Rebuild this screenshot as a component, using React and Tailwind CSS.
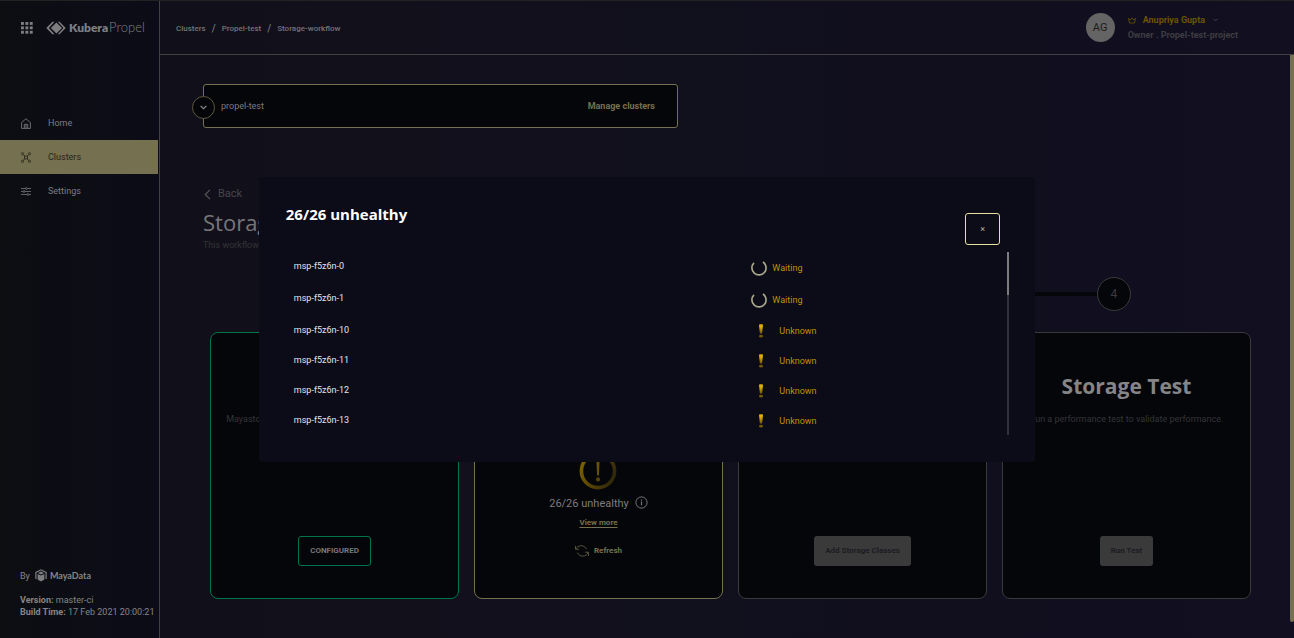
import React from "react";

const pools = [
  { name: "msp-f5z6n-0", status: "Waiting" },
  { name: "msp-f5z6n-1", status: "Waiting" },
  { name: "msp-f5z6n-10", status: "Unknown" },
  { name: "msp-f5z6n-11", status: "Unknown" },
  { name: "msp-f5z6n-12", status: "Unknown" },
  { name: "msp-f5z6n-13", status: "Unknown" },
];

function GridIcon() {
  return (
    <svg width="12" height="12" viewBox="0 0 12 12" fill="#7e7e81">
      {[0, 4.4, 8.8].map((y) => [0, 4.4, 8.8].map((x) => <rect key={`${x}-${y}`} x={x} y={y} width="2.9" height="2.9" />))}
    </svg>
  );
}

function KuberaMark() {
  return (
    <svg width="20" height="14" viewBox="0 0 20 14" fill="#7e7e81">
      <path d="M10.4 1.4 L16 7 L10.4 12.6 L4.8 7 Z" />
      <path d="M6.4 0.8 H8.4 L2.9 7 L8.4 13.2 H6.4 L0.3 7 Z" />
      <path d="M11.8 0.8 H13.6 L19.7 7 L13.6 13.2 H11.8 L17.4 7 Z" />
    </svg>
  );
}

function HomeIcon() {
  return (
    <svg width="10" height="11" viewBox="0 0 10 11" fill="none" stroke="#77777a" strokeWidth="0.9">
      <path d="M0.6 4.6 L5 0.7 L9.4 4.6 V10.4 H0.6 Z" />
      <path d="M3.3 10.2 V6.3 H6.7 V10.2 M5 6.5 V10" />
    </svg>
  );
}

function ClustersIcon() {
  return (
    <svg width="10" height="11" viewBox="0 0 10 11" fill="none" stroke="#26241b" strokeWidth="0.8">
      <circle cx="1.5" cy="1.7" r="1.1" />
      <circle cx="8.5" cy="1.7" r="1.1" />
      <circle cx="1.5" cy="9.3" r="1.1" />
      <circle cx="8.5" cy="9.3" r="1.1" />
      <rect x="3.6" y="4.1" width="2.8" height="2.8" />
      <path d="M2.3 2.6 L3.7 4.2 M7.7 2.6 L6.3 4.2 M2.3 8.4 L3.7 6.8 M7.7 8.4 L6.3 6.8" />
    </svg>
  );
}

function SettingsIcon() {
  return (
    <svg width="10" height="9" viewBox="0 0 10 9" fill="none" stroke="#77777a" strokeWidth="0.8">
      <path d="M0 1.5 H4.3 M6.3 1.5 H10 M0 4.5 H2 M4 4.5 H10 M0 7.5 H6 M8 7.5 H10" />
      <circle cx="5.3" cy="1.5" r="0.9" />
      <circle cx="3" cy="4.5" r="0.9" />
      <circle cx="7" cy="7.5" r="0.9" />
    </svg>
  );
}

function MayaMark() {
  return (
    <svg width="12" height="13" viewBox="0 0 12 13">
      <path d="M2.6 5 L6 6.6 L9.4 5 V10.6 L6 12.6 L2.6 10.6 Z" fill="#7e7e81" />
      <path d="M0.9 10 V3.4 L6 0.8 L11.1 3.4 V10" fill="none" stroke="#7e7e81" strokeWidth="1.2" />
      <path d="M3 4 L6 2.5 L9 4 L6 5.5 Z" fill="#7e7e81" />
    </svg>
  );
}

function Spinner() {
  return (
    <svg width="16" height="16" viewBox="0 0 16 16" fill="none" stroke="#a9a68c" strokeWidth="1.7">
      <path d="M3 2.8 A7.1 7.1 0 1 0 12 2" />
    </svg>
  );
}

function Exclamation() {
  return (
    <svg width="6" height="14" viewBox="0 0 6 14">
      <defs>
        <linearGradient id="bang" x1="0" y1="0" x2="0" y2="1">
          <stop offset="0.3" stopColor="#dcae00" />
          <stop offset="1" stopColor="#6b560a" />
        </linearGradient>
      </defs>
      <path d="M1 1.2 Q1 0.2 2 0.2 H4 Q5 0.2 5 1.2 L4.1 9.6 H1.9 Z" fill="url(#bang)" />
      <ellipse cx="3" cy="12.2" rx="2" ry="1.4" fill="#705a0b" />
    </svg>
  );
}

function WarningRing() {
  return (
    <svg width="38" height="38" viewBox="0 0 38 38">
      <defs>
        <linearGradient id="ring" x1="0" y1="0.3" x2="1" y2="0.75">
          <stop offset="0" stopColor="#7a5f00" />
          <stop offset="1" stopColor="#2e260a" />
        </linearGradient>
      </defs>
      <circle cx="19" cy="19" r="16.6" fill="none" stroke="url(#ring)" strokeWidth="3.6" />
      <path d="M17.4 8 H20.6 L19.9 23.6 H18.1 Z" fill="#66520a" />
      <circle cx="19" cy="27.4" r="2.1" fill="#54440a" />
    </svg>
  );
}

function RefreshIcon() {
  return (
    <svg width="14" height="12" viewBox="0 0 14 12" fill="none" stroke="#5f5b3f" strokeWidth="0.9">
      <path d="M0.5 1 V4.3 H4 M0.8 4.1 C2.6 0 9.2 -0.8 11.6 4.2" />
      <path d="M13.5 11 V7.2 H10 M13.2 7.5 C11.4 12 4.8 12.6 2.3 7.6" />
    </svg>
  );
}

function Sidebar() {
  return (
    <aside className="flex w-40 shrink-0 flex-col border-r border-[#414142] bg-linear-to-r from-[#0c0e12] to-[#0c0c18]">
      <div className="flex h-[53px] items-center gap-[13px] pl-[21px]">
        <button aria-label="Applications">
          <GridIcon />
        </button>
        <a href="#home" className="flex items-center gap-[3px] font-['Lato',sans-serif] text-[12px] leading-4 text-[#7e7e81]">
          <KuberaMark />
          <span>
            <span className="font-extrabold">Kubera</span>
            <span className="ml-px text-[13px] font-light">Propel</span>
          </span>
        </a>
      </div>
      <nav className="mt-[52px] flex flex-col pr-px text-[#7c7c7f]">
        <a href="#home" className="flex h-[34px] items-center gap-[17px] pl-[21px]">
          <HomeIcon />
          Home
        </a>
        <a href="#clusters" className="flex h-[34px] items-center gap-[17px] bg-[#757050] pl-[21px] text-[#26241b]">
          <ClustersIcon />
          Clusters
        </a>
        <a href="#settings" className="flex h-[34px] items-center gap-[17px] pl-[21px]">
          <SettingsIcon />
          Settings
        </a>
      </nav>
      <div className="mt-auto pb-5 pl-5 text-[#858587]">
        <div className="mb-3 flex items-center">
          By
          <span className="ml-[5px] flex items-center gap-[3px] font-['Lato',sans-serif] font-bold">
            <MayaMark />
            MayaData
          </span>
        </div>
        <p>
          <b>Version:</b> master-ci
        </p>
        <p className="whitespace-nowrap">
          <b>Build Time:</b> 17 Feb 2021 20:00:21
        </p>
      </div>
    </aside>
  );
}

function TopBar() {
  return (
    <header className="flex h-[54px] items-center border-b border-[#414142] pr-14 pl-4">
      <nav aria-label="Breadcrumb" className="flex items-center gap-1.5 pt-0.5 text-[8px] font-medium text-[#737377]">
        <a href="#clusters">Clusters</a>
        <span className="text-[10px]">/</span>
        <a href="#propel-test">Propel-test</a>
        <span className="text-[10px]">/</span>
        <a href="#workflow">Storage-workflow</a>
      </nav>
      <div className="ml-auto flex items-center gap-[13px]">
        <span className="flex size-[29px] items-center justify-center rounded-full bg-[#646464] text-[11px] text-[#1c1c1e]">AG</span>
        <div className="font-bold">
          <button className="flex h-[15px] items-center text-[#6b5500]">
            <svg width="8" height="7" viewBox="0 0 8 7" fill="none" stroke="#6b5500" strokeWidth="0.8" className="mr-[7px]">
              <path d="M0.5 1.4 L2.3 3 L4 0.9 L5.7 3 L7.5 1.4 L6.5 6 H1.5 Z" />
            </svg>
            Anupriya Gupta
            <svg width="5" height="4" viewBox="0 0 5 4" fill="none" stroke="#4a4a50" strokeWidth="0.9" className="ml-2">
              <path d="M0.5 0.8 L2.5 2.8 L4.5 0.8" />
            </svg>
          </button>
          <p className="h-[15px] leading-[15px] text-[#3d3d43]">Owner . Propel-test-project</p>
        </div>
      </div>
    </header>
  );
}

function ClusterPicker() {
  return (
    <div className="mr-[613px] flex h-11 min-w-[475px] items-center rounded-[3px] border border-[#757050] bg-[#05060a] pr-[22px]">
      <button
        aria-label="Choose cluster"
        className="-ml-3 mt-0.5 flex size-[23px] items-center justify-center rounded-full border border-[#5c583f] bg-[#05060a]"
      >
        <svg width="7" height="5" viewBox="0 0 7 5" fill="none" stroke="#8a8a8c" strokeWidth="1.2">
          <path d="M0.6 0.8 L3.5 3.7 L6.4 0.8" />
        </svg>
      </button>
      <span className="ml-1.5 text-[#7c7c7f]">propel-test</span>
      <a href="#manage" className="ml-auto font-bold text-[#757050]">
        Manage clusters
      </a>
    </div>
  );
}

function Stepper() {
  return (
    <ol className="mr-[159px] ml-[110px] flex h-[34px] items-center text-[#3c3c40]">
      {[1, 2, 3, 4].map((step) => (
        <li key={step} className={step === 1 ? "flex items-center" : "flex flex-1 items-center"}>
          {step > 1 && <span className="h-1 flex-1 bg-[#05060a]" />}
          <span className="flex size-[34px] items-center justify-center rounded-full border border-[#3a3a3c] bg-[#05060a] text-[12px]">
            {step}
          </span>
        </li>
      ))}
    </ol>
  );
}

function Card({ title, text, border, children }) {
  return (
    <section className={`flex h-[267px] flex-col items-center rounded-lg border bg-[#05060a] px-3 pt-[39px] pb-8 ${border}`}>
      <h2 className="h-7 font-['Open_Sans',sans-serif] text-[21px] leading-7 font-bold text-[#858587]">{title}</h2>
      <p className="mt-[13px] whitespace-nowrap text-[#343438]">{text}</p>
      <div className="mt-auto flex flex-col items-center">{children}</div>
    </section>
  );
}

function Cards() {
  const disabledButton = "h-[30px] rounded-[3px] bg-[#3a3a3a] px-[11px] text-[8px] font-bold text-[#1c1c22]";
  return (
    <div className="grid grid-cols-4 gap-[15px] pr-[39px] pl-[7px]">
      <Card text="Mayastor has been installed and set up on this cluster." border="border-[#00754a]">
        <button className="h-[30px] rounded-[3px] border border-[#00754a] px-[11px] text-[8px] font-bold text-[#77777a]">CONFIGURED</button>
      </Card>
      <Card border="border-[#757050]">
        <WarningRing />
        <div className="mt-1 flex h-5 items-center gap-1.5 text-[11px] text-[#7c7c7f]">
          26/26 unhealthy
          <svg width="13" height="13" viewBox="0 0 13 13" fill="none" stroke="#77777a" className="mb-1">
            <circle cx="6.5" cy="6.5" r="5.6" />
            <path d="M6.5 5.6 V9.2 M6.5 3.5 V4.7" strokeWidth="1.2" />
          </svg>
        </div>
        <a href="#more" className="mt-px text-[8px] leading-4 font-bold text-[#757050] underline underline-offset-2">
          View more
        </a>
        <button className="mt-3 mb-[7px] flex h-4 items-center gap-[5px] text-[8px] font-bold text-[#757050]">
          <RefreshIcon />
          Refresh
        </button>
      </Card>
      <Card border="border-[#3a3a3c]">
        <button className={disabledButton}>Add Storage Classes</button>
      </Card>
      <Card title="Storage Test" text="Run a performance test to validate performance." border="border-[#3a3a3c]">
        <button className={disabledButton}>Run Test</button>
      </Card>
    </div>
  );
}

function PoolsDialog() {
  return (
    <div className="fixed inset-0 flex items-center justify-center">
      <div role="dialog" aria-labelledby="pools-title" className="flex h-[285px] w-3/5 flex-col rounded-[3px] bg-[#0c0b18] pr-[26px] pb-[27px] pl-[27px]">
        <div className="flex h-[75px] shrink-0 justify-between pr-[9px]">
          <h1 id="pools-title" className="mt-[25px] font-['Open_Sans',sans-serif] text-[15px] leading-6 font-bold text-white">
            26/26 unhealthy
          </h1>
          <button aria-label="Close" className="mt-9 flex h-8 w-[35px] items-center justify-center rounded-[3px] border border-[#e8e0a0] text-[#b9b59a]">
            ×
          </button>
        </div>
        <div className="flex min-h-0 flex-1">
          <div className="flex-1 overflow-y-auto pl-2 [scrollbar-width:none]">
            <table className="w-full table-fixed text-left">
              <tbody>
                {pools.map((pool) => (
                  <tr key={pool.name} className={pool.status === "Waiting" ? "h-8" : "h-[30px]"}>
                    <td className="w-16/25 p-0 pt-2 align-top text-[#e4e4e6]">{pool.name}</td>
                    <td className="p-0 pl-px align-middle text-[#bd9500]">
                      {pool.status === "Waiting" ? (
                        <span className="flex items-center gap-[5px]">
                          <Spinner />
                          {pool.status}
                        </span>
                      ) : (
                        <span className="flex items-center gap-[15px] pl-[7px]">
                          <Exclamation />
                          {pool.status}
                        </span>
                      )}
                    </td>
                  </tr>
                ))}
              </tbody>
            </table>
          </div>
          <div className="w-0.5 bg-[#32313c]">
            <div className="h-[43px] bg-[#7c7c80]" />
          </div>
        </div>
      </div>
    </div>
  );
}

export default function App() {
  return (
    <div className="flex min-h-screen border-t border-[#222222] bg-linear-to-r from-[#111019] to-[#110f20] font-['Roboto',sans-serif] text-[9px] leading-3">
      <Sidebar />
      <div className="flex min-w-0 flex-1 flex-col">
        <TopBar />
        <div className="flex flex-1">
          <main className="min-w-0 flex-1 pt-[29px] pl-[43px]">
            <ClusterPicker />
            <a href="#back" className="mt-[58px] flex h-4 items-center gap-[7px] pl-px text-[11px] text-[#46464b]">
              <svg width="7" height="11" viewBox="0 0 7 11" fill="none" stroke="#5a5a5e" strokeWidth="1.1">
                <path d="M6 0.8 L1.2 5.5 L6 10.2" />
              </svg>
              Back
            </a>
            <h1 className="mt-1.5 font-['Open_Sans',sans-serif] text-[22px] leading-7 text-[#77777a]">Storage workflow</h1>
            <p className="mt-[3px] mb-[26px] text-[#333338]">This workflow sets up storage.</p>
            <Stepper />
            <div className="mt-[21px]">
              <Cards />
            </div>
          </main>
          <div className="mb-4 w-1 rounded-b-sm bg-[#757050]" />
        </div>
      </div>
      <PoolsDialog />
    </div>
  );
}
